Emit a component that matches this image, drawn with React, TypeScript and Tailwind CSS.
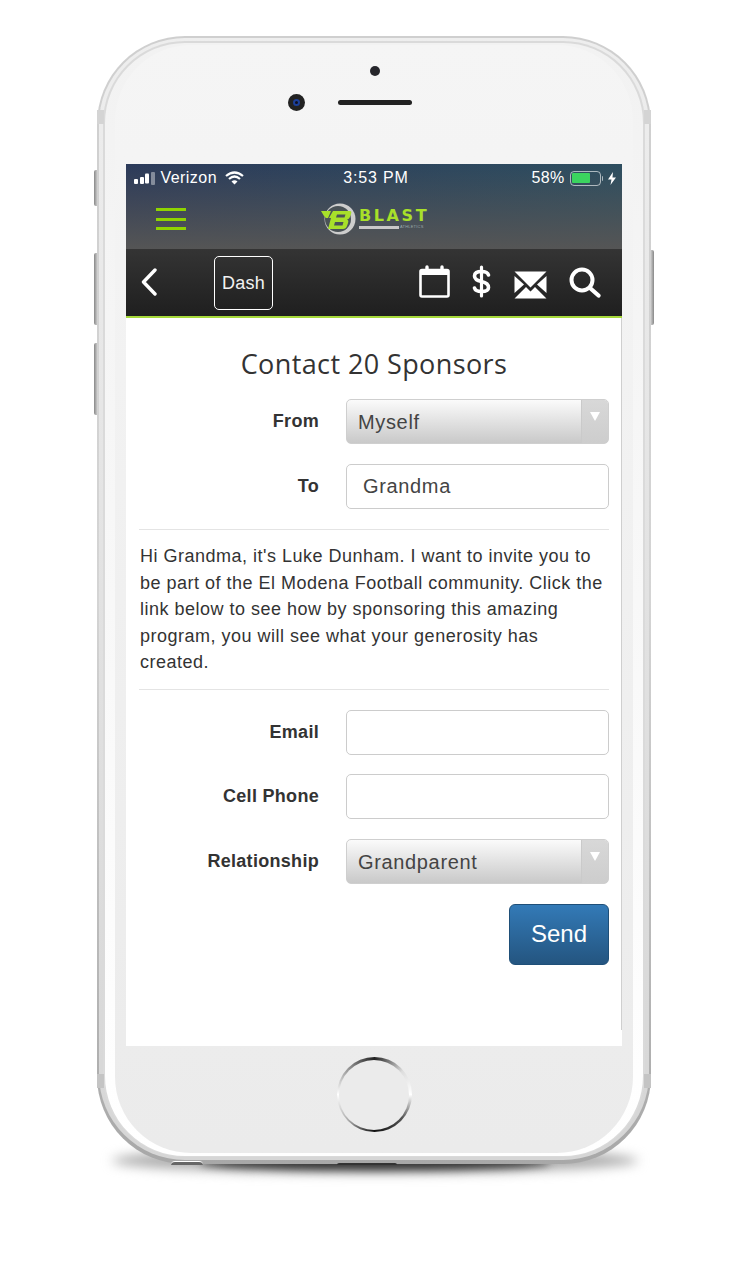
const fieldFont = "font-['Liberation_Sans',Arial,sans-serif]"

function Row({ label, children }: { label: string; children: React.ReactNode }) {
  return (
    <div className="flex items-center">
      <label className="w-[180px] text-right text-[18px] font-bold tracking-[0.3px] text-[#333]">{label}</label>
      <div className="ml-[27px] flex-1">{children}</div>
    </div>
  )
}

function SelectBox({ value }: { value: string }) {
  return (
    <div className="flex h-[45px] overflow-hidden rounded-[5px] border border-[#cfcfcf] bg-gradient-to-b from-[#fbfbfb] to-[#c9c9c9]">
      <span className="flex-1 pl-[11px] text-[20px] leading-[45px] tracking-[0.65px] text-[#444]">{value}</span>
      <span className="flex w-[27px] items-center justify-center border-l border-[#cacaca] bg-gradient-to-b from-[#d8d8d8] to-[#cdcdcd]">
        <span className="mb-[10px] h-0 w-0 border-x-[5px] border-t-[9px] border-x-transparent border-t-white" />
      </span>
    </div>
  )
}

function TextBox({ value }: { value?: string }) {
  return (
    <input
      readOnly
      value={value ?? ''}
      className="block h-[45px] w-full rounded-[5px] border border-[#ccc] bg-white pl-[16px] text-[20px] tracking-[0.65px] text-[#444] outline-none"
    />
  )
}

function Logo() {
  return (
    <div className="flex w-[108px] items-center">
      <svg width="37" height="32" viewBox="0 0 37 32" className="shrink-0">
        <circle cx="20" cy="16" r="15.500" fill="#cdcdcd" />
        <circle cx="18" cy="16" r="13" fill="#4a5257" />
        <path d="M1 8 H30 Q32 8 31 11 L30 14 Q29 16 27 16.500 Q29 17 28 20 L27 23 Q26 26 23 26 H8 L11 15 H6 L4 13 Z" fill="#a8e02a" />
        <path d="M17 11.500 H25.500 L24.500 14.500 H16 Z M15 19 H23.500 L22.500 22.500 H14 Z M11 8 L13 8 L9 15 L8 15 Z" fill="#4a5257" />
      </svg>
      <div className="ml-[2px] flex flex-col">
        <span className="text-[16px] font-bold leading-[14px] tracking-[2.600px] text-[#a8e02a] font-['DejaVu_Sans',sans-serif]">BLAST</span>
        <div className="mt-[2px] flex items-center gap-[1px]">
          <span className="h-[3px] w-[40px] shrink-0 bg-[#c8c8c8]" />
          <span className="text-[4px] leading-[4px] tracking-[0.2px] text-[#9aa]">ATHLETICS</span>
        </div>
      </div>
    </div>
  )
}

function StatusBar() {
  return (
    <div className="flex h-[28px] items-center pl-[8px] pr-[6px] text-[16px] tracking-[0.3px] text-white">
      <div className="flex w-[210px] items-center">
        <div className="flex items-center gap-[1.500px]">
          <span className="h-[5px] w-[4px] translate-y-[3px] rounded-[1px] bg-white" />
          <span className="h-[7px] w-[4px] translate-y-[2px] rounded-[1px] bg-white" />
          <span className="h-[10px] w-[4px] translate-y-[0.500px] rounded-[1px] bg-white" />
          <span className="h-[13px] w-[4px] rounded-[1px] bg-white/40" />
        </div>
        <span className="ml-[6px] tracking-[0.45px]">Verizon</span>
        <svg className="ml-[8px]" width="19" height="14" viewBox="0 0 19 14" fill="none" stroke="#fff" strokeWidth="2.200">
          <path d="M1 5 Q9.500 -2 18 5" />
          <path d="M4 8 Q9.500 3 15 8" />
          <path d="M9.500 13.500 L6.500 10.500 Q9.500 8 12.500 10.500 Z" fill="#fff" stroke="none" />
        </svg>
      </div>
      <span className="w-[189px] tracking-[0.85px]">3:53 PM</span>
      <span>58%</span>
      <div className="ml-[5px] flex items-center">
        <div className="h-[15px] w-[31px] rounded-[4px] border border-white/60 p-[1.500px]">
          <div className="h-full w-[18px] rounded-[1px] bg-[#3bd45f]" />
        </div>
        <span className="ml-[1px] h-[5px] w-[1.500px] rounded-r bg-white/60" />
      </div>
      <svg className="ml-[5px]" width="8" height="13" viewBox="0 0 8 13" fill="#fff">
        <path d="M5 0 L0 7.500 H3.500 L2.500 13 L8 5.500 H4.500 Z" />
      </svg>
    </div>
  )
}

function NavBar() {
  return (
    <div className="flex h-[69px] items-center border-b-2 border-[#a6d93a] bg-gradient-to-b from-[#343434] to-[#1f1f1f] pl-[15px] text-white">
      <svg className="mb-[1px]" width="16" height="28" viewBox="0 0 16 28" fill="none" stroke="#fff" strokeWidth="3.400" strokeLinecap="round" strokeLinejoin="round">
        <path d="M14 2 L2.500 14 L14 26" />
      </svg>
      <div className="ml-[57px] mt-[1px] flex h-[54px] w-[59px] items-center justify-center rounded-[5px] border-[1.500px] border-white text-[18px] tracking-[0.2px] text-[#f2f2f2]">
        Dash
      </div>
      {/* calendar */}
      <svg className="mb-[3px] ml-[146px]" width="31" height="33" viewBox="0 0 31 33" fill="none" stroke="#fff">
        <rect x="1.500" y="5" width="28" height="26.500" rx="1.500" strokeWidth="2.600" />
        <path d="M1.500 7.500 H29.500" strokeWidth="5" />
        <path d="M8 2 V7 M23 2 V7" strokeWidth="3.400" strokeLinecap="round" />
      </svg>
      {/* dollar */}
      <svg className="mb-[3px] ml-[22px]" width="19" height="33" viewBox="0 0 19 33" fill="none" stroke="#fff" strokeLinecap="round">
        <path d="M16.500 10 Q15.500 6.500 9.500 6.500 Q2.500 6.500 2.500 11 Q2.500 15 9.500 16.500 Q16.500 18 16.500 22.500 Q16.500 26.500 9.500 26.500 Q3.500 26.500 2.500 23" strokeWidth="3.600" />
        <path d="M9.500 2 V31" strokeWidth="3.200" />
      </svg>
      {/* envelope */}
      <svg className="ml-[23px] mt-[4px]" width="33" height="28" viewBox="0 0 33 28" fill="#fff">
        <path d="M0.500 0.500 H32.500 L16.500 16.500 Z" />
        <path d="M0.500 5 L10 13.500 L0.500 22 Z M32.500 5 L23 13.500 L32.500 22 Z" />
        <path d="M0.500 27.500 L12 16 L16.500 20.500 L21 16 L32.500 27.500 Z" />
      </svg>
      {/* search */}
      <svg className="ml-[22px]" width="32" height="31" viewBox="0 0 32 31" fill="none" stroke="#fff" strokeLinecap="round">
        <circle cx="13" cy="13" r="10.500" strokeWidth="4" />
        <path d="M21 21 L29.500 28.500" strokeWidth="4.200" />
      </svg>
    </div>
  )
}

function ContactForm() {
  return (
    <div className="flex flex-1 flex-col bg-white pb-[16px]">
      <div className="flex flex-1 flex-col border-r border-[#cfcfcf] pl-[13px] pr-[12px]">
        <h1 className="pt-[27px] text-center text-[27px] leading-[38px] tracking-[0.4px] text-[#333] font-['Open_Sans',sans-serif]">Contact 20 Sponsors</h1>
        <div className="mt-[16px] flex flex-col gap-[20px]">
          <Row label="From"><SelectBox value="Myself" /></Row>
          <Row label="To"><TextBox value="Grandma" /></Row>
        </div>
        <hr className="mt-[20px] border-[#e4e4e4]" />
        <p className="py-[13px] pl-[1px] text-[18px] leading-[26.500px] tracking-[0.5px] text-[#333]">
          Hi Grandma, it's Luke Dunham. I want to invite you to be part of the El Modena Football community. Click the link below to see how by sponsoring this amazing program, you will see what your generosity has created.
        </p>
        <hr className="border-[#e4e4e4]" />
        <div className="mt-[20px] flex flex-col gap-[19.500px]">
          <Row label="Email"><TextBox /></Row>
          <Row label="Cell Phone"><TextBox /></Row>
          <Row label="Relationship"><SelectBox value="Grandparent" /></Row>
        </div>
        <button className="mt-[20px] h-[61px] w-[100px] self-end rounded-[6px] border border-[#1f4f78] bg-gradient-to-b from-[#337ab7] to-[#245580] text-[24px] text-white">
          Send
        </button>
      </div>
    </div>
  )
}

export default function App() {
  return (
    <div className={`relative h-[1272px] w-[750px] overflow-hidden bg-white pl-[97px] pt-[36px] ${fieldFont}`}>
      {/* shadow under the phone */}
      <div className="absolute left-[112px] top-[1148px] h-[25px] w-[526px] rounded-[50%] bg-[#aaa] blur-[6px]" />
      <div className="absolute left-[200px] top-[1155px] h-[15px] w-[350px] rounded-[50%] bg-[#333] blur-[4px]" />
      {/* side buttons */}
      <div className="absolute left-[94px] top-[170px] h-[36px] w-[4px] rounded-l-[2px] bg-gradient-to-r from-[#888] to-[#ddd]" />
      <div className="absolute left-[94px] top-[253px] h-[72px] w-[4px] rounded-l-[2px] bg-gradient-to-r from-[#888] to-[#ddd]" />
      <div className="absolute left-[94px] top-[343px] h-[72px] w-[4px] rounded-l-[2px] bg-gradient-to-r from-[#888] to-[#ddd]" />
      <div className="absolute left-[650px] top-[250px] h-[75px] w-[4px] rounded-r-[2px] bg-gradient-to-l from-[#888] to-[#ddd]" />

      <div className="relative h-[1128px] w-[554px] rounded-[88px] bg-gradient-to-b from-[#cfcfcf] via-[#d4d4d4] to-[#a8a8a8] px-[2px] pb-[4px] pt-[2px]">
        <div className="h-full w-full rounded-[86px] bg-gradient-to-b from-[#eeeeee] to-[#d6d6d6] px-[4px] pb-[3px] pt-[3px]">
          <div className="h-full w-full rounded-[82px] bg-[#dadada] px-[2px] pb-[1px] pt-[2px]">
            <div className="h-full w-full rounded-[80px] bg-gradient-to-b from-[#f2f2f2] via-[#f8f8f8] to-white px-[10px] pb-[3px] pt-[2px]">
              <div className="flex h-full flex-col items-center rounded-[76px] bg-gradient-to-b from-[#f5f5f5] to-[#ebebeb] px-[2px]">
                <div className="h-[119px] w-full">
                  <div className="ml-[253px] mt-[21px] h-[10px] w-[10px] rounded-full bg-[#26262b]" />
                  <div className="ml-[171px] mt-[18px] flex items-center">
                    <div className="flex h-[17px] w-[17px] items-center justify-center rounded-full bg-[#222]">
                      <span className="h-[7px] w-[7px] rounded-full border-2 border-[#1b3f9a] bg-[#101020]" />
                    </div>
                    <div className="ml-[33px] h-[5px] w-[74px] rounded-full bg-[#222]" />
                  </div>
                </div>
                <div className="flex h-[882px] w-[496px] flex-col">
                  <div className="h-[85px] bg-[linear-gradient(180deg,rgba(85,85,85,0)_0%,#555_100%),linear-gradient(90deg,#2b3a5a_0%,#2d4e60_100%)]">
                    <StatusBar />
                    <div className="relative flex h-[57px] items-start justify-center pt-[11px]">
                      <div className="absolute left-[30px] top-[16px] flex flex-col gap-[6.500px]">
                        <span className="h-[3px] w-[30px] bg-[#8fd400]" />
                        <span className="h-[3px] w-[30px] bg-[#8fd400]" />
                        <span className="h-[3px] w-[30px] bg-[#8fd400]" />
                      </div>
                      <Logo />
                    </div>
                  </div>
                  <NavBar />
                  <ContactForm />
                </div>
                <div className="mt-[11px] h-[75px] w-[75px] rounded-full bg-[conic-gradient(#222_0deg,#ddd_50deg,#fff_90deg,#555_130deg,#111_180deg,#aaa_225deg,#fff_270deg,#888_320deg,#222_360deg)] p-[2.500px]">
                  <div className="h-full w-full rounded-full bg-[#ebebeb]" />
                </div>
              </div>
            </div>
          </div>
        </div>
        {/* antenna strips and bottom details */}
        <div className="absolute left-0 top-[74px] h-[14px] w-[7px] bg-[#d4d4d4]" />
        <div className="absolute right-0 top-[74px] h-[14px] w-[7px] bg-[#d4d4d4]" />
        <div className="absolute bottom-[76px] left-0 h-[14px] w-[7px] bg-[#c4c4c4]" />
        <div className="absolute bottom-[76px] right-0 h-[14px] w-[7px] bg-[#c4c4c4]" />
        <div className="absolute bottom-[-1px] left-[74px] h-[4px] w-[32px] rounded-t-full border-t border-white bg-[#666]" />
        <div className="absolute bottom-[-1px] left-[240px] h-[2px] w-[60px] rounded-t-full bg-[#333]" />
      </div>
    </div>
  )
}
